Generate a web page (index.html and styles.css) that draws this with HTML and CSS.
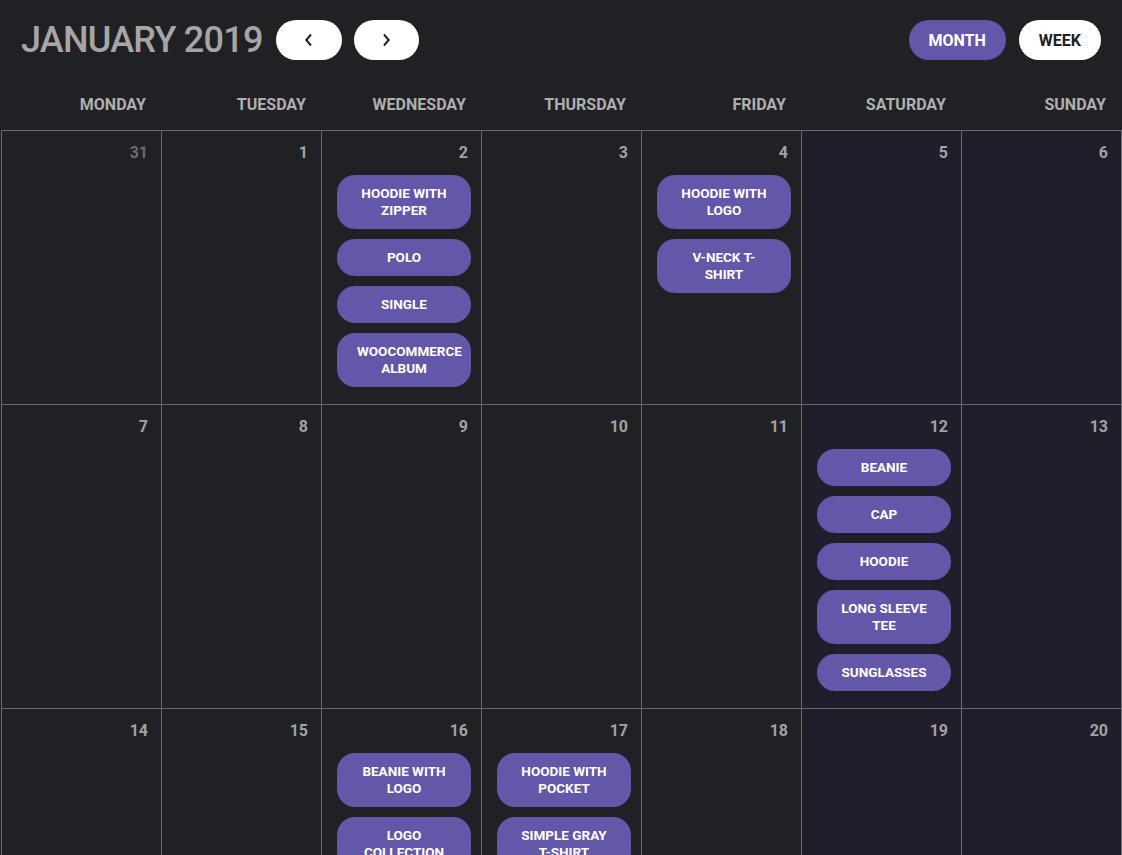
FILE: index.html
```html
<!DOCTYPE html>
<html>
<head>
<meta charset="utf-8">
<link rel="stylesheet" href="styles.css">
</head>
<body>
<div class="calendar">
  <div class="toolbar">
    <div class="toolbar-left">
      <h1 class="title">JANUARY 2019</h1>
      <button class="nav-btn" aria-label="Previous">
        <svg width="10" height="14" viewBox="0 0 10 14"><path d="M7 1.5 L2.3 7 L7 12.5" fill="none" stroke="#1c2436" stroke-width="2"/></svg>
      </button>
      <button class="nav-btn" aria-label="Next">
        <svg width="10" height="14" viewBox="0 0 10 14"><path d="M3 1.5 L7.7 7 L3 12.5" fill="none" stroke="#1c2436" stroke-width="2"/></svg>
      </button>
    </div>
    <div class="toolbar-right">
      <button class="view-btn active">MONTH</button>
      <button class="view-btn">WEEK</button>
    </div>
  </div>

  <div class="weekdays">
    <div class="weekday">MONDAY</div>
    <div class="weekday">TUESDAY</div>
    <div class="weekday">WEDNESDAY</div>
    <div class="weekday">THURSDAY</div>
    <div class="weekday">FRIDAY</div>
    <div class="weekday">SATURDAY</div>
    <div class="weekday">SUNDAY</div>
  </div>

  <div class="grid">
    <div class="cell"><div class="date muted">31</div></div>
    <div class="cell"><div class="date">1</div></div>
    <div class="cell"><div class="date">2</div>
      <div class="events">
        <div class="event">HOODIE WITH ZIPPER</div>
        <div class="event">POLO</div>
        <div class="event">SINGLE</div>
        <div class="event">WOOCOMMERCE ALBUM</div>
      </div>
    </div>
    <div class="cell"><div class="date">3</div></div>
    <div class="cell"><div class="date">4</div>
      <div class="events">
        <div class="event">HOODIE WITH LOGO</div>
        <div class="event">V-NECK T-SHIRT</div>
      </div>
    </div>
    <div class="cell weekend"><div class="date">5</div></div>
    <div class="cell weekend"><div class="date">6</div></div>

    <div class="cell"><div class="date">7</div></div>
    <div class="cell"><div class="date">8</div></div>
    <div class="cell"><div class="date">9</div></div>
    <div class="cell"><div class="date">10</div></div>
    <div class="cell"><div class="date">11</div></div>
    <div class="cell weekend"><div class="date">12</div>
      <div class="events">
        <div class="event">BEANIE</div>
        <div class="event">CAP</div>
        <div class="event">HOODIE</div>
        <div class="event">LONG SLEEVE TEE</div>
        <div class="event">SUNGLASSES</div>
      </div>
    </div>
    <div class="cell weekend"><div class="date">13</div></div>

    <div class="cell"><div class="date">14</div></div>
    <div class="cell"><div class="date">15</div></div>
    <div class="cell"><div class="date">16</div>
      <div class="events">
        <div class="event">BEANIE WITH LOGO</div>
        <div class="event">LOGO COLLECTION</div>
      </div>
    </div>
    <div class="cell"><div class="date">17</div>
      <div class="events">
        <div class="event">HOODIE WITH POCKET</div>
        <div class="event">SIMPLE GRAY T-SHIRT</div>
      </div>
    </div>
    <div class="cell"><div class="date">18</div></div>
    <div class="cell weekend"><div class="date">19</div></div>
    <div class="cell weekend"><div class="date">20</div></div>
  </div>
</div>
</body>
</html>
```

FILE: styles.css
```css
html, body {
  margin: 0;
  padding: 0;
  background: #202125;
}
body {
  font-family: Roboto, "Liberation Sans", sans-serif;
  color: #a8a8a8;
}
.calendar {
  padding-left: 1px;
}
.toolbar {
  display: flex;
  justify-content: space-between;
  align-items: center;
  padding: 20px 21px 0 20px;
  height: 40px;
}
.toolbar-left {
  display: flex;
  align-items: center;
  gap: 12px;
}
.toolbar-left .title {
  margin-right: 1px;
}
.title {
  margin: 0;
  font-size: 36px;
  font-weight: 500;
  color: #a6a6a6;
  line-height: 40px;
  letter-spacing: -0.75px;
}
.nav-btn {
  width: 66px;
  height: 40px;
  border: none;
  border-radius: 20px;
  background: #ffffff;
  display: flex;
  align-items: center;
  justify-content: center;
  padding: 0;
}
.nav-btn + .nav-btn {
  width: 65px;
}
.toolbar-right {
  display: flex;
  gap: 13px;
}
.view-btn {
  height: 40px;
  border: none;
  border-radius: 20px;
  background: #ffffff;
  color: #202125;
  font-family: Roboto, "Liberation Sans", sans-serif;
  font-weight: 700;
  font-size: 16px;
  padding: 0 20px;
}
.view-btn.active {
  background: #6357a9;
  color: #ffffff;
}
.weekdays {
  display: grid;
  grid-template-columns: repeat(7, 160px);
  margin-top: 20px;
  padding-left: 1px;
}
.weekday {
  text-align: right;
  padding: 16px 16px 16px 0;
  line-height: 18px;
  font-size: 16px;
  font-weight: 700;
  color: #b0b0b0;
}
.grid {
  display: grid;
  grid-template-columns: repeat(7, 160px);
  border-top: 1px solid #6a6a6a;
  border-left: 1px solid #6a6a6a;
  width: 1120px;
}
.cell {
  border-right: 1px solid #6a6a6a;
  border-bottom: 1px solid #6a6a6a;
  padding: 12px 13px 17px 15px;
  background: #202125;
}
.cell.weekend {
  background: #1f1f2c;
}
.date {
  text-align: right;
  font-size: 16px;
  font-weight: 700;
  line-height: 20px;
  color: #a3a3a3;
}
.date.muted {
  color: #6b6b6b;
}
.events {
  display: flex;
  flex-direction: column;
  gap: 10px;
  margin-top: 12px;
}
.event {
  width: 134px;
  box-sizing: border-box;
  background: #6357a9;
  color: #ffffff;
  border-radius: 18px;
  padding: 10px 20px;
  font-size: 13.5px;
  font-weight: 700;
  line-height: 17px;
  text-align: center;
}
```
